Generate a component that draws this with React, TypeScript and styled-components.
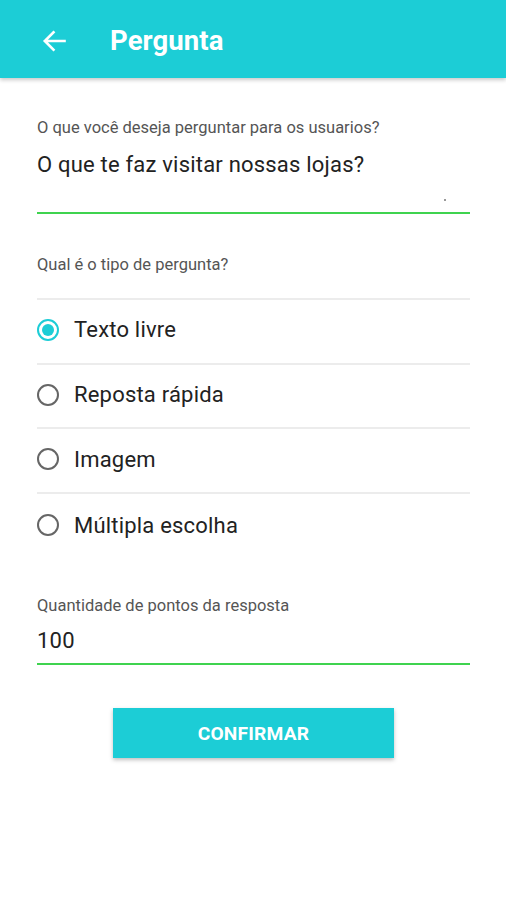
import React from "react";
import styled, { createGlobalStyle } from "styled-components";

const Global = createGlobalStyle`
  html, body { margin: 0; padding: 0; background: #ffffff; }
  body { font-family: Roboto, "Noto Sans", Arial, sans-serif; }
  * { box-sizing: border-box; }
`;

const Page = styled.div`
  width: 506px;
  min-height: 900px;
  background: #fff;
  display: flex;
  flex-direction: column;
`;

const AppBar = styled.header`
  height: 78px;
  background: #1ccdd6;
  display: flex;
  align-items: center;
  padding: 4px 0 0 42px;
  box-shadow: 0 2px 4px rgba(0, 0, 0, 0.22);
  position: relative;
  z-index: 1;
`;

const BackButton = styled.button`
  width: 24px;
  height: 22px;
  padding: 0;
  border: none;
  background: transparent;
  display: flex;
  align-items: center;
  justify-content: center;
  margin-right: 44px;
`;

const Title = styled.h1`
  margin: 0;
  color: #fff;
  font-family: Roboto, Arial, sans-serif;
  font-weight: 700;
  font-size: 27.5px;
  line-height: 32px;
  letter-spacing: 0.1px;
`;

const Content = styled.main`
  display: flex;
  flex-direction: column;
  padding: 0 36px 0 37px;
`;

const Field = styled.div<{ $top: number }>`
  display: flex;
  flex-direction: column;
  margin-top: ${(p) => p.$top}px;
`;

const Label = styled.label`
  font-size: 16.5px;
  color: #555;
  line-height: 20px;
`;

const Value = styled.div<{ $gap: number; $pad: number }>`
  font-size: 22px;
  color: #222;
  line-height: 28px;
  margin-top: ${(p) => p.$gap}px;
  padding-bottom: ${(p) => p.$pad}px;
  border-bottom: 2px solid #3fd34f;
  position: relative;
  letter-spacing: 0.2px;
`;

const Dot = styled.span`
  position: absolute;
  right: 24px;
  bottom: 11px;
  width: 2px;
  height: 2px;
  border-radius: 50%;
  background: #777;
`;

const SectionLabel = styled(Label)`
  margin-top: 41px;
  margin-bottom: 23px;
`;

const OptionList = styled.div`
  display: flex;
  flex-direction: column;
  border-top: 2px solid #ececec;
`;

const Option = styled.div<{ $last?: boolean }>`
  height: ${(p) => (p.$last ? 65 : 64.7)}px;
  display: flex;
  align-items: center;
  border-bottom: ${(p) => (p.$last ? "none" : "2px solid #ececec")};
  padding-bottom: 3px;
`;

const Radio = styled.span<{ $checked?: boolean }>`
  width: 22px;
  height: 22px;
  border-radius: 50%;
  border: 2px solid ${(p) => (p.$checked ? "#1ccdd6" : "#666")};
  display: flex;
  align-items: center;
  justify-content: center;
  margin-right: 15px;
  flex-shrink: 0;
  &::after {
    content: "";
    width: 12px;
    height: 12px;
    border-radius: 50%;
    background: #1ccdd6;
    display: ${(p) => (p.$checked ? "block" : "none")};
  }
`;

const OptionText = styled.span`
  font-size: 22px;
  color: #222;
  letter-spacing: 0.2px;
`;

const ButtonRow = styled.div`
  display: flex;
  justify-content: center;
  margin-top: 43px;
`;

const ConfirmButton = styled.button`
  width: 281px;
  height: 50px;
  border: none;
  background: #1ccdd6;
  color: #fff;
  font-family: Roboto, Arial, sans-serif;
  font-weight: 700;
  font-size: 19.2px;
  letter-spacing: 0.2px;
  box-shadow: 0 2px 4px rgba(0, 0, 0, 0.25);
`;

const options = ["Texto livre", "Reposta rápida", "Imagem", "Múltipla escolha"];

export default function App() {
  return (
    <Page>
      <Global />
      <AppBar>
        <BackButton aria-label="Voltar">
          <svg width="24" height="22" viewBox="0 0 24 22" fill="none">
            <path
              d="M22.5 11H3.5M11.5 2.3L2.8 11l8.7 8.7"
              stroke="#fff"
              strokeWidth="2.6"
              strokeLinecap="square"
            />
          </svg>
        </BackButton>
        <Title>Pergunta</Title>
      </AppBar>
      <Content>
        <Field $top={40}>
          <Label>O que você deseja perguntar para os usuarios?</Label>
          <Value $gap={13} $pad={33}>
            O que te faz visitar nossas lojas?
            <Dot />
          </Value>
        </Field>
        <SectionLabel>Qual é o tipo de pergunta?</SectionLabel>
        <OptionList>
          {options.map((o, i) => (
            <Option key={o} $last={i === options.length - 1}>
              <Radio $checked={i === 0} />
              <OptionText>{o}</OptionText>
            </Option>
          ))}
        </OptionList>
        <Field $top={37}>
          <Label>Quantidade de pontos da resposta</Label>
          <Value $gap={11} $pad={8}>100</Value>
        </Field>
        <ButtonRow>
          <ConfirmButton>CONFIRMAR</ConfirmButton>
        </ButtonRow>
      </Content>
    </Page>
  );
}
